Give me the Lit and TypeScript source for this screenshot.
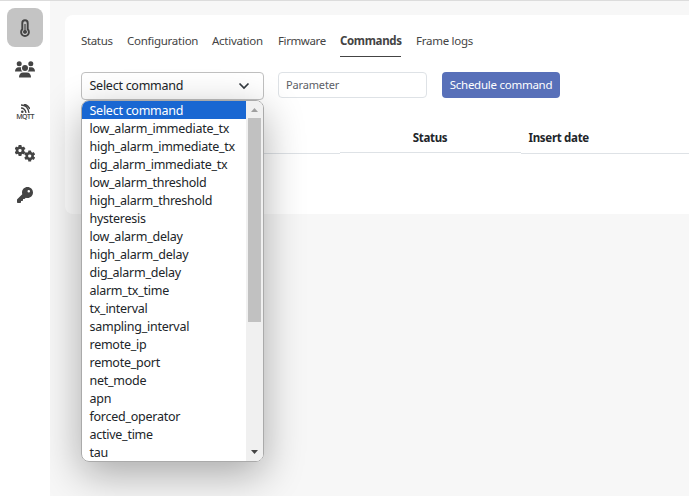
import { LitElement, html, css, svg } from "lit";
import { customElement } from "lit/decorators.js";
import { classMap } from "lit/directives/class-map.js";

const OPTIONS = [
  "Select command", "low_alarm_immediate_tx", "high_alarm_immediate_tx", "dig_alarm_immediate_tx",
  "low_alarm_threshold", "high_alarm_threshold", "hysteresis", "low_alarm_delay", "high_alarm_delay",
  "dig_alarm_delay", "alarm_tx_time", "tx_interval", "sampling_interval", "remote_ip", "remote_port",
  "net_mode", "apn", "forced_operator", "active_time", "tau",
];
const TABS = ["Status", "Configuration", "Activation", "Firmware", "Commands", "Frame logs"];

const gear = (cx: number, cy: number) => svg`
  <g transform="translate(${cx} ${cy})">
    <circle r="2.9" fill="none" stroke="#444" stroke-width="2.6"/>
    ${[0, 60, 120, 180, 240, 300].map((a) => svg`<rect x="-1.5" y="-5.5" width="3" height="2.5" rx=".5" transform="rotate(${a})"/>`)}
  </g>`;

@customElement("app-root")
export class AppRoot extends LitElement {
  static styles = css`
    :host { display: block; width: 689px; height: 496px; overflow: hidden; background: #f7f7f7;
      font-family: "Noto Sans", "Open Sans", sans-serif; font-size: 11.5px; letter-spacing: -.26px; color: #444; }
    * { box-sizing: border-box; }
    .shell { display: flex; height: 496px; border-top: 1px solid #dcdcdc; }
    .side { width: 50px; background: #fff; display: flex; flex-direction: column; align-items: center; padding-top: 7px; gap: 3px; flex: none; position: relative; z-index: 1; }
    .nav { width: 36px; height: 39px; border-radius: 8px; display: grid; place-items: center; }
    .nav:last-child { height: 37px; }
    .nav.on { background: #c4c4c4; }
    .nav svg { display: block; fill: #444; }
    .mqtt { display: flex; flex-direction: column; align-items: center; }
    .mqtt span { font: 600 7px/7px "Open Sans", sans-serif; letter-spacing: -.6px; }
    .main { flex: 1; padding: 14px 0 0 15px; min-width: 0; }
    .card { height: 199px; background: #fff; border-radius: 8px 0 0 8px; padding-left: 16px; }
    .tabs { display: flex; height: 42px; padding-top: 15px; }
    .tab { height: 27px; line-height: 22px; white-space: nowrap; margin-right: 15px; }
    .tab:nth-child(1) { width: 31px; letter-spacing: -.35px; }
    .tab:nth-child(2) { width: 70px; }
    .tab:nth-child(3) { width: 51px; }
    .tab:nth-child(4) { width: 47px; letter-spacing: -.4px; }
    .tab.on { width: 61px; font-weight: 700; border-bottom: 1px solid #444; letter-spacing: -.35px; }
    .form { display: flex; margin-top: 15px; height: 28px; }
    .select { width: 183px; height: 28px; border: 1px solid #c0c0c0; border-radius: 4px; padding: 0 13px 1px 7.5px; display: flex; align-items: center; justify-content: space-between; font-size: 12.5px; color: #212529; position: relative; }
    .chev { fill: none; stroke: #343a40; stroke-width: 1.7; }
    .param { width: 149px; height: 26px; margin-left: 14px; border: 1px solid #dee2e6; border-radius: 4px; padding: 0 7px; line-height: 24px; color: #5c6066; font-size: 11px; letter-spacing: -.15px; }
    .btn { width: 118px; height: 26px; margin-left: 15px; background: #5870b9; border-radius: 4px; line-height: 26px; text-align: center; color: #fff; white-space: nowrap; }
    .list { position: absolute; left: -1px; top: 27px; width: 183px; height: 362px; border: 1px solid #aaa; border-radius: 8px; background: #fff; overflow: hidden; display: flex; }
    .shade { position: absolute; left: -1px; top: 27px; width: 183px; height: 362px; border-radius: 8px; box-shadow: 0 12px 40px rgba(0,0,0,.32); }
    .opts { flex: 1; }
    .opt { height: 18px; line-height: 20px; padding-left: 7.5px; white-space: nowrap; }
    .opt.on { background: #1967d2; color: #fff; }
    .bar { width: 17px; background: #f0f0f0; display: flex; flex-direction: column; align-items: center; justify-content: space-between; }
    .bar svg { display: block; width: 13px; height: 17px; }
    .thumb { width: 13px; height: 204px; background: #c1c1c1; margin-bottom: auto; }
    .head { display: grid; grid-template-columns: 259px 181px 1fr; margin-top: 26px; color: #212529; font-weight: 700; line-height: 24px; }
    .head div { border-bottom: 1px solid #dee2e6; height: 28px; }
    .head div:nth-child(2) { height: 27px; text-align: center; letter-spacing: -.3px; padding-right: 1px; }
    .head div:nth-child(3) { padding-left: 7.5px; letter-spacing: -.3px; }
  `;

  render() {
    return html`
      <div class="shell">
        <nav class="side">
          <div class="nav on"><svg width="12" height="18" viewBox="0 0 12 18"><path d="M3.300 4a2.700 2.700 0 0 1 5.400 0v6.300a3.900 3.900 0 1 1-5.400 0z" fill="none" stroke="#444" stroke-width="1.900"/><path d="M5.400 5h1.200v6a2 2 0 1 1-1.200 0z"/></svg></div>
          <div class="nav"><svg width="20" height="17" viewBox="0 0 20 17"><circle cx="4.200" cy="2.800" r="2.500"/><circle cx="15.800" cy="2.800" r="2.500"/><circle cx="10" cy="7" r="3"/><path d="M0 10.500C0 8 1.500 6.300 3.500 6.300h2.700c-.5 1.800 0 3.200 1.300 4.200zM20 10.500c0-2.500-1.500-4.200-3.500-4.200h-2.700c.5 1.800 0 3.200-1.300 4.200zM4 16c0-2.800 1.800-4.600 4-4.600h4c2.200 0 4 1.800 4 4.600q0 .5-.5.5h-11q-.5 0-.5-.5z"/></svg></div>
          <div class="nav"><div class="mqtt"><svg width="9" height="9" viewBox="0 0 9 9"><g fill="none" stroke="#444" stroke-width="1.300"><path d="M0 1q7 0 8 8M0 4q4 0 5 5M3 0q4 1 6 5"/></g><circle cx="1.300" cy="7.700" r="1.300"/></svg><span>MQTT</span></div></div>
          <div class="nav"><svg width="20" height="17" viewBox="0 0 20 17">${gear(5, 5.5)}${gear(14.7, 11)}</svg></div>
          <div class="nav"><svg width="16" height="16" viewBox="0 0 512 512"><path d="M336 352c97.200 0 176-78.800 176-176S433.200 0 336 0S160 78.800 160 176c0 18.700 2.900 36.800 8.300 53.700L7 391c-4.500 4.500-7 10.600-7 17v80c0 13.300 10.700 24 24 24h80c13.300 0 24-10.700 24-24v-40h40c13.300 0 24-10.700 24-24v-40h40c6.400 0 12.500-2.500 17-7l33.300-33.300c16.900 5.400 35 8.300 53.700 8.300zM376 96a40 40 0 1 1 0 80 40 40 0 1 1 0-80z"/></svg></div>
        </nav>
        <main class="main">
          <section class="card">
            <div class="tabs">${TABS.map((t) => html`<div class=${classMap({ tab: true, on: t === "Commands" })}>${t}</div>`)}</div>
            <div class="form">
              <div class="select"><span>Select command</span>
                <svg class="chev" width="12" height="8" viewBox="0 0 12 8"><path d="M1.500 1.500L6 6l4.500-4.500"/></svg>
                <div class="shade"></div>
                <div class="list">
                  <div class="opts">${OPTIONS.map((o, i) => html`<div class=${classMap({ opt: true, on: i === 0 })}>${o}</div>`)}</div>
                  <div class="bar"><svg viewBox="0 0 13 17"><path d="M3 11h7L6.500 7z" fill="#a0a0a0"/></svg><div class="thumb"></div><svg viewBox="0 0 13 17"><path d="M3 6h7L6.500 10z" fill="#444"/></svg></div>
                </div>
              </div>
              <div class="param">Parameter</div>
              <div class="btn">Schedule command</div>
            </div>
            <div class="head"><div></div><div>Status</div><div>Insert date</div></div>
          </section>
        </main>
      </div>`;
  }
}
